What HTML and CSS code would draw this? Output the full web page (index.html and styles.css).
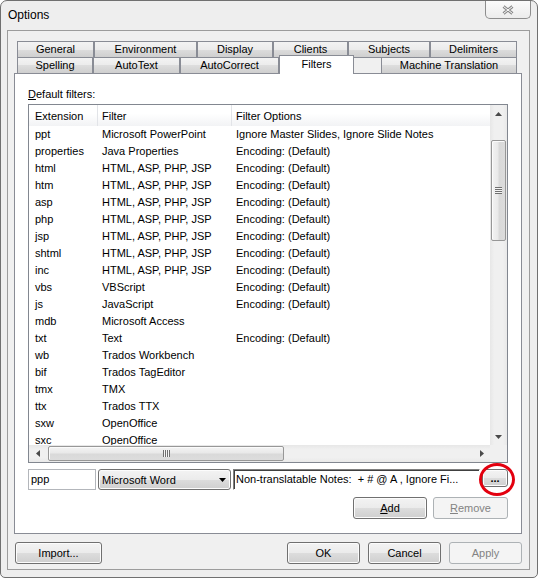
FILE: index.html
```html
<!DOCTYPE html>
<html>
<head>
<meta charset="utf-8">
<title>Options</title>
<link rel="stylesheet" href="styles.css">
</head>
<body>
<div class="window">
  <div class="titlebar">
    <span class="title">Options</span>
    <div class="close">
      <svg width="12" height="10" viewBox="0 0 12 10"><path d="M1.5 1.5 L10.5 8.5 M10.5 1.5 L1.5 8.5" stroke="#8a8a8a" stroke-width="3" fill="none"/><path d="M1.5 1.5 L10.5 8.5 M10.5 1.5 L1.5 8.5" stroke="#ffffff" stroke-width="1" fill="none"/></svg>
    </div>
  </div>
  <div class="client">
    <div class="tabs">
      <div class="tabrow">
        <div class="tab t-general">General</div>
        <div class="tab t-environment">Environment</div>
        <div class="tab t-display">Display</div>
        <div class="tab t-clients">Clients</div>
        <div class="tab t-subjects">Subjects</div>
        <div class="tab t-delimiters">Delimiters</div>
      </div>
      <div class="tabrow front">
        <div class="tab t-spelling">Spelling</div>
        <div class="tab t-autotext">AutoText</div>
        <div class="tab t-autocorrect">AutoCorrect</div>
        <div class="tab t-filters selected">Filters</div>
        <div class="tab-gap"></div>
        <div class="tab t-mt">Machine Translation</div>
      </div>
    </div>
    <div class="page">
      <div class="label"><u>D</u>efault filters:</div>
      <div class="list">
        <div class="list-main">
          <div class="header">
            <div class="hc c1">Extension</div>
            <div class="hc c2">Filter</div>
            <div class="hc c3">Filter Options</div>
          </div>
          <div class="rows">
            <div class="row"><span class="c1">ppt</span><span class="c2">Microsoft PowerPoint</span><span class="c3">Ignore Master Slides, Ignore Slide Notes</span></div>
            <div class="row"><span class="c1">properties</span><span class="c2">Java Properties</span><span class="c3">Encoding: (Default)</span></div>
            <div class="row"><span class="c1">html</span><span class="c2">HTML, ASP, PHP, JSP</span><span class="c3">Encoding: (Default)</span></div>
            <div class="row"><span class="c1">htm</span><span class="c2">HTML, ASP, PHP, JSP</span><span class="c3">Encoding: (Default)</span></div>
            <div class="row"><span class="c1">asp</span><span class="c2">HTML, ASP, PHP, JSP</span><span class="c3">Encoding: (Default)</span></div>
            <div class="row"><span class="c1">php</span><span class="c2">HTML, ASP, PHP, JSP</span><span class="c3">Encoding: (Default)</span></div>
            <div class="row"><span class="c1">jsp</span><span class="c2">HTML, ASP, PHP, JSP</span><span class="c3">Encoding: (Default)</span></div>
            <div class="row"><span class="c1">shtml</span><span class="c2">HTML, ASP, PHP, JSP</span><span class="c3">Encoding: (Default)</span></div>
            <div class="row"><span class="c1">inc</span><span class="c2">HTML, ASP, PHP, JSP</span><span class="c3">Encoding: (Default)</span></div>
            <div class="row"><span class="c1">vbs</span><span class="c2">VBScript</span><span class="c3">Encoding: (Default)</span></div>
            <div class="row"><span class="c1">js</span><span class="c2">JavaScript</span><span class="c3">Encoding: (Default)</span></div>
            <div class="row"><span class="c1">mdb</span><span class="c2">Microsoft Access</span><span class="c3"></span></div>
            <div class="row"><span class="c1">txt</span><span class="c2">Text</span><span class="c3">Encoding: (Default)</span></div>
            <div class="row"><span class="c1">wb</span><span class="c2">Trados Workbench</span><span class="c3"></span></div>
            <div class="row"><span class="c1">bif</span><span class="c2">Trados TagEditor</span><span class="c3"></span></div>
            <div class="row"><span class="c1">tmx</span><span class="c2">TMX</span><span class="c3"></span></div>
            <div class="row"><span class="c1">ttx</span><span class="c2">Trados TTX</span><span class="c3"></span></div>
            <div class="row"><span class="c1">sxw</span><span class="c2">OpenOffice</span><span class="c3"></span></div>
            <div class="row"><span class="c1">sxc</span><span class="c2">OpenOffice</span><span class="c3"></span></div>
          </div>
        </div>
        <div class="vscroll">
          <div class="sbtn"><svg width="7" height="4" viewBox="0 0 7 4"><polygon points="0,4 3.5,0 7,4" fill="#4a4a4a"/></svg></div>
          <div class="vthumb"><span class="vgrip"></span></div>
          <div class="sbtn bottom"><svg width="7" height="4" viewBox="0 0 7 4"><polygon points="0,0 7,0 3.5,4" fill="#4a4a4a"/></svg></div>
        </div>
        <div class="hscroll">
          <div class="sbtn"><svg width="4" height="7" viewBox="0 0 4 7"><polygon points="4,0 4,7 0,3.5" fill="#4a4a4a"/></svg></div>
          <div class="hthumb"><span class="hgrip"></span></div>
          <div class="sbtn right"><svg width="4" height="7" viewBox="0 0 4 7"><polygon points="0,0 4,3.5 0,7" fill="#4a4a4a"/></svg></div>
        </div>
        <div class="corner"></div>
      </div>
      <div class="edit-row">
        <div class="ext-input">ppp</div>
        <div class="combo"><span>Microsoft Word</span><svg width="7" height="4" viewBox="0 0 7 4"><polygon points="0,0 7,0 3.5,4" fill="#000"/></svg></div>
        <div class="field">Non-translatable Notes:&nbsp; + # @ A , Ignore Fi...</div>
        <div class="btn dots">...</div>
        <div class="highlight"></div>
      </div>
      <div class="btn-row">
        <div class="btn add"><u>A</u>dd</div>
        <div class="btn remove disabled"><u>R</u>emove</div>
      </div>
    </div>
    <div class="dialog-buttons">
      <div class="btn import">Import...</div>
      <div class="spacer"></div>
      <div class="btn dlg">OK</div>
      <div class="btn dlg">Cancel</div>
      <div class="btn dlg disabled">Apply</div>
    </div>
  </div>
</div>
</body>
</html>
```
FILE: styles.css
```css
* { box-sizing: border-box; }
html, body { margin: 0; padding: 0; background: #ffffff; }
body {
  font-family: "Liberation Sans", Arial, sans-serif;
  font-size: 11px;
  color: #000;
}
.window {
  width: 538px;
  height: 578px;
  border: 1px solid #707070;
  border-radius: 7px 7px 5px 5px;
  background: #eeeeee;
  display: flex;
  flex-direction: column;
  overflow: hidden;
}
.titlebar {
  height: 29px;
  display: flex;
  justify-content: space-between;
  align-items: flex-start;
  flex: none;
}
.title {
  font-size: 12px;
  line-height: 29px;
  padding-left: 7px;
}
.close {
  width: 46px;
  height: 18px;
  margin-right: 6px;
  border: 1px solid #8d8d8d;
  border-top: none;
  border-radius: 0 0 5px 5px;
  background: linear-gradient(#fbfbfb, #ececec);
  display: flex;
  align-items: center;
  justify-content: center;
}
.client {
  flex: 1;
  margin: 0 7px 7px 6px;
  border: 1px solid #9c9c9c;
  background: #f0f0f0;
  padding: 10px 7px 0 6px;
  display: flex;
  flex-direction: column;
}
.tabs { padding-left: 3px; }
.tabrow { display: flex; height: 16px; }
.tab {
  height: 16px;
  line-height: 15px;
  text-align: center;
  white-space: nowrap;
  border: 1px solid #898c95;
  border-bottom: none;
  background: linear-gradient(#f3f3f3, #ebebeb 50%, #dddddd 50%, #cfcfcf);
}
.t-general { width: 77px; }
.t-environment { width: 103px; }
.t-display { width: 76px; }
.t-clients { width: 75px; }
.t-subjects { width: 82px; }
.t-delimiters { width: 87px; }
.t-spelling { width: 76px; }
.t-autotext { width: 87px; }
.t-autocorrect { width: 99px; }
.t-filters { width: 75px; }
.t-mt { width: 136px; }
.tab-gap { width: 27px; border-top: 1px solid #898c95; }
.tab.selected {
  position: relative;
  z-index: 2;
  margin-top: -2px;
  height: 19px;
  line-height: 16px;
  background: #ffffff;
}
.page {
  height: 461px;
  border: 1px solid #898c95;
  background: #ffffff;
  padding: 13px 13px 14px 13px;
  display: flex;
  flex-direction: column;
}
.label { height: 13px; line-height: 14px; }
.list {
  margin-top: 4px;
  width: 480px;
  height: 359px;
  border: 1px solid #828790;
  display: grid;
  grid-template-columns: 1fr 17px;
  grid-template-rows: 1fr 17px;
  background: #fff;
}
.list-main {
  grid-row: 1;
  grid-column: 1;
  overflow: hidden;
  display: flex;
  flex-direction: column;
}
.header {
  height: 21px;
  display: flex;
  flex: none;
  background: linear-gradient(#ffffff 0%, #ffffff 40%, #f2f3f5 100%);
}
.hc {
  line-height: 19px;
  padding-top: 2px;
  white-space: nowrap;
}
.header .c1, .row .c1 { width: 69px; padding-left: 6px; flex: none; }
.header .c2, .row .c2 { width: 134px; padding-left: 4px; flex: none; }
.header .c3, .row .c3 { flex: 1; padding-left: 4px; }
.header .c1, .header .c2 { border-right: 1px solid #e2e4e8; }
.rows { flex: 1; overflow: hidden; }
.row {
  display: flex;
  height: 17px;
  line-height: 17px;
  white-space: nowrap;
}
.vscroll {
  grid-row: 1;
  grid-column: 2;
  background: linear-gradient(to right, #e7e7e7, #f0f0f0 25%, #f0f0f0 75%, #e9e9e9);
  display: flex;
  flex-direction: column;
}
.sbtn {
  width: 17px;
  height: 17px;
  flex: none;
  display: flex;
  align-items: center;
  justify-content: center;
}
.vscroll .bottom { margin-top: auto; }
.vthumb {
  margin: 18px 1px 0 1px;
  height: 101px;
  border: 1px solid #979797;
  border-radius: 2px;
  background: linear-gradient(to right, #f3f3f3, #e9e9e9 45%, #d9d9d9 55%, #dcdcdc);
  box-shadow: inset 1px 1px 0 #fbfbfb;
  display: flex;
  align-items: center;
  justify-content: center;
}
.vgrip {
  width: 7px;
  height: 7px;
  background: repeating-linear-gradient(#6f6f6f 0, #6f6f6f 1px, #f4f4f4 1px, #f4f4f4 2px);
}
.hscroll {
  grid-row: 2;
  grid-column: 1;
  display: flex;
  background: linear-gradient(#e7e7e7, #f0f0f0 25%, #f0f0f0 75%, #e9e9e9);
}
.hscroll .right { margin-left: auto; }
.hthumb {
  margin: 1px 0 1px 2px;
  width: 236px;
  height: 15px;
  border: 1px solid #979797;
  border-radius: 2px;
  background: linear-gradient(#f3f3f3, #e9e9e9 45%, #d9d9d9 55%, #dcdcdc);
  box-shadow: inset 1px 1px 0 #fbfbfb;
  display: flex;
  align-items: center;
  justify-content: center;
}
.hgrip {
  width: 7px;
  height: 7px;
  background: repeating-linear-gradient(to right, #6f6f6f 0, #6f6f6f 1px, #f4f4f4 1px, #f4f4f4 2px);
}
.corner { grid-row: 2; grid-column: 2; background: #f0f0f0; }
.edit-row {
  position: relative;
  margin-top: 6px;
  height: 21px;
  display: flex;
  align-items: flex-start;
}
.ext-input {
  width: 68px;
  height: 21px;
  border: 1px solid #b3b6bb;
  background: #fff;
  padding-left: 2px;
  line-height: 19px;
}
.combo {
  margin-left: 2px;
  width: 133px;
  height: 21px;
  border: 1px solid #707070;
  border-radius: 3px;
  background: linear-gradient(#f3f3f3, #ebebeb 50%, #dddddd 50%, #cfcfcf);
  box-shadow: inset 0 0 0 1px #fcfcfc;
  padding: 0 4px 0 3px;
  display: flex;
  align-items: center;
  justify-content: space-between;
}
.field {
  margin-left: 2px;
  width: 247px;
  height: 21px;
  border-top: 1px solid #808080;
  border-left: 1px solid #808080;
  border-right: 1px solid #ffffff;
  border-bottom: 1px solid #ffffff;
  box-shadow: inset 1px 1px 0 #404040;
  background: #fff;
  padding-left: 2px;
  line-height: 19px;
  white-space: nowrap;
  overflow: hidden;
}
.btn {
  height: 22px;
  border: 1px solid #707070;
  border-radius: 3px;
  background: linear-gradient(#f3f3f3, #ebebeb 50%, #dddddd 50%, #cfcfcf);
  box-shadow: inset 0 0 0 1px #fcfcfc;
  text-align: center;
  line-height: 20px;
  white-space: nowrap;
}
.btn.disabled {
  border-color: #adb2b5;
  background: #f4f4f4;
  box-shadow: none;
  color: #838383;
}
.dots {
  margin-left: 2px;
  width: 26px;
  height: 18px;
  line-height: 16px;
  font-weight: bold;
}
.highlight {
  position: absolute;
  left: 451px;
  top: -6px;
  width: 36px;
  height: 33px;
  border: 3px solid #e3000f;
  border-radius: 50%;
}
.btn-row {
  margin-top: 7px;
  display: flex;
  justify-content: flex-end;
  gap: 6px;
}
.add { width: 74px; }
.remove { width: 75px; }
.dialog-buttons {
  margin-top: 8px;
  display: flex;
  gap: 8px;
}
.import { width: 87px; margin-left: 1px; }
.spacer { flex: 1; }
.dlg { width: 73px; }
```
